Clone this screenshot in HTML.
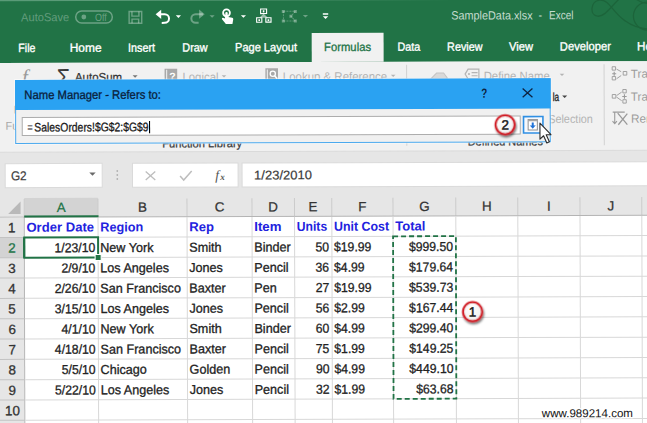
<!DOCTYPE html>
<html lang="en"><head><meta charset="utf-8"><title>Name Manager - Refers to</title>
<style>html,body{margin:0;padding:0;background:#fff;overflow:hidden}svg{display:block}</style></head>
<body>
<svg width="647" height="423" viewBox="0 0 647 423" font-family='"Liberation Sans", sans-serif' text-rendering="geometricPrecision">
<g transform="rotate(-0.17 323.5 211.5)">
<rect x="-10" y="-10" width="667" height="443" fill="#ffffff" />
<rect x="-10" y="-10" width="667" height="72.1" fill="#217346" />
<rect x="-10" y="62.1" width="667" height="89.2" fill="#f1f1f1" />
<rect x="-10" y="151.3" width="667" height="65" fill="#e6e6e6" />
<line x1="-10" y1="151.3" x2="657" y2="151.3" stroke="#dadada" stroke-width="1" />
<rect x="-10" y="-3" width="667" height="3.4" fill="#5a9b78" />
<g fill="none" stroke="#1c6239" stroke-width="1.3" opacity="0.85"><path d="M623 -3 C 612 6, 606 18, 598 17 C 590 16, 591 2, 600 1 C 610 0, 612 12, 626 22 C 634 28, 642 30, 652 30"/><circle cx="648" cy="17" r="14"/><path d="M632 -4 C 640 4, 648 6, 655 3"/></g>
<text x="21.7" y="20.5" font-size="11.8" fill="rgba(255,255,255,0.3)" textLength="48" lengthAdjust="spacingAndGlyphs">AutoSave</text>
<rect x="76.3" y="10.3" width="36.6" height="12" rx="6" fill="none" stroke="rgba(255,255,255,0.34)" stroke-width="1.5"/>
<circle cx="84.4" cy="16.3" r="2.4" fill="rgba(255,255,255,0.34)"/>
<text x="95.5" y="20.3" font-size="10.5" fill="rgba(255,255,255,0.34)" textLength="11.8" lengthAdjust="spacingAndGlyphs">Off</text>
<g fill="none" stroke="rgba(255,255,255,0.34)" stroke-width="1.4"><path d="M129.7 10.9h12.6v11.8h-12.6z"/><path d="M132.5 11v4.6h7v-4.6"/><path d="M132.6 22.6v-4h6.6v4"/></g>
<g fill="none" stroke="#fff" stroke-width="2" stroke-linecap="butt"><path d="M158 13.8 H165.3 a4.3 4.3 0 0 1 0 8.6 H162.3"/></g><path d="M156.2 13.8 l5.6 -4.6 v9.2z" fill="#fff"/>
<path d="M176.4 14.899999999999999h5.2l-2.6 2.6z" fill="#fff"/>
<g fill="none" stroke="rgba(255,255,255,0.34)" stroke-width="2"><path d="M203.5 13.8 H196.2 a4.3 4.3 0 0 0 0 8.6 H199.2"/></g><path d="M205.3 13.8 l-5.6 -4.6 v9.2z" fill="rgba(255,255,255,0.34)"/>
<path d="M210.1 14.899999999999999h5.2l-2.6 2.6z" fill="rgba(255,255,255,0.34)"/>
<g fill="#fff"><circle cx="227.1" cy="12.6" r="4.3"/><path d="M225.6 12.4 a1.5 1.5 0 0 1 3 0 v4.2 l4.2 1 q1.2 .4 1 1.7 l-.8 4.5 h-6.6 l-3.8 -4.8 q-.6 -1.2 .7 -1.6 l2.3 .8z"/></g><circle cx="227.1" cy="12.5" r="2.5" fill="#217346"/><rect x="225.9" y="11.6" width="2.4" height="6" rx="1.2" fill="#fff"/>
<path d="M241.4 14.899999999999999h5.2l-2.6 2.6z" fill="#fff"/>
<g fill="none" stroke="#fff" stroke-width="1.1"><rect x="261.2" y="8.8" width="6" height="4.6"/><rect x="257.2" y="17.6" width="5.2" height="4.4"/><rect x="266.4" y="17.6" width="5.2" height="4.4"/></g><path d="M259.8 17.6 l4.4 -4 l4.4 4z" fill="rgba(255,255,255,0.55)"/><g fill="#fff"><rect x="263.4" y="10" width="1.6" height="2.2"/><rect x="259" y="19" width="1.6" height="1.8"/><rect x="268.2" y="19" width="1.6" height="1.8"/></g>
<g fill="none" stroke="rgba(255,255,255,0.34)" stroke-width="1" stroke-dasharray="2 1" opacity="0.8"><path d="M284 11.2h12M284 21h12M284 11.2v9.8M296 11.2l-4.5 4.9 4.5 4.9"/></g><g fill="rgba(255,255,255,0.34)"><rect x="282.4" y="9.8" width="3" height="3"/><rect x="294.4" y="9.8" width="3" height="3"/><rect x="282.4" y="19.5" width="3" height="3"/><rect x="294.4" y="19.5" width="3" height="3"/><rect x="290" y="14.6" width="3" height="3"/></g>
<path d="M303.4 14.899999999999999h5.2l-2.6 2.6z" fill="rgba(255,255,255,0.34)"/>
<rect x="323.4" y="13.2" width="5.4" height="1.5" fill="#fff" />
<path d="M323.40000000000003 16.25h5.4l-2.7 2.7z" fill="#fff"/>
<text x="451.8" y="20" font-size="12" fill="#c5dccf" textLength="81.4" lengthAdjust="spacingAndGlyphs">SampleData.xlsx</text>
<text x="539.2" y="20" font-size="12" fill="#c5dccf" textLength="3.6" lengthAdjust="spacingAndGlyphs">-</text>
<text x="549.6" y="20" font-size="12" fill="#c5dccf" textLength="24.4" lengthAdjust="spacingAndGlyphs">Excel</text>
<rect x="312.2" y="33" width="71.9" height="29" fill="#f1f1f1" />
<text x="18.8" y="51.1" font-size="11.9" fill="#ffffff" textLength="17.1" lengthAdjust="spacingAndGlyphs" stroke="#ffffff" stroke-width="0.35">File</text>
<text x="70.2" y="51.1" font-size="11.9" fill="#ffffff" textLength="31.8" lengthAdjust="spacingAndGlyphs" stroke="#ffffff" stroke-width="0.35">Home</text>
<text x="128.6" y="51.1" font-size="11.9" fill="#ffffff" textLength="27.0" lengthAdjust="spacingAndGlyphs" stroke="#ffffff" stroke-width="0.35">Insert</text>
<text x="182.8" y="51.1" font-size="11.9" fill="#ffffff" textLength="25.4" lengthAdjust="spacingAndGlyphs" stroke="#ffffff" stroke-width="0.35">Draw</text>
<text x="235.5" y="51.1" font-size="11.9" fill="#ffffff" textLength="62.0" lengthAdjust="spacingAndGlyphs" stroke="#ffffff" stroke-width="0.35">Page Layout</text>
<text x="397.9" y="51.1" font-size="11.9" fill="#ffffff" textLength="22.8" lengthAdjust="spacingAndGlyphs" stroke="#ffffff" stroke-width="0.35">Data</text>
<text x="447.6" y="51.1" font-size="11.9" fill="#ffffff" textLength="35.3" lengthAdjust="spacingAndGlyphs" stroke="#ffffff" stroke-width="0.35">Review</text>
<text x="509.6" y="51.1" font-size="11.9" fill="#ffffff" textLength="24.0" lengthAdjust="spacingAndGlyphs" stroke="#ffffff" stroke-width="0.35">View</text>
<text x="560.3" y="51.1" font-size="11.9" fill="#ffffff" textLength="51.1" lengthAdjust="spacingAndGlyphs" stroke="#ffffff" stroke-width="0.35">Developer</text>
<text x="324.6" y="51.1" font-size="11.9" fill="#217346" textLength="46.9" lengthAdjust="spacingAndGlyphs" stroke="#217346" stroke-width="0.3">Formulas</text>
<text x="637.6" y="51.1" font-size="11.9" fill="#ffffff" textLength="24" lengthAdjust="spacingAndGlyphs" stroke="#ffffff" stroke-width="0.35">Help</text>
<text x="22.4" y="83" font-size="21" fill="#9a9a9a" font-family='"Liberation Serif", serif' font-style="italic">f</text>
<text x="57.2" y="85.2" font-size="24.5" fill="#3b3b3b" textLength="13.4" lengthAdjust="spacingAndGlyphs">Σ</text>
<text x="75.3" y="80.6" font-size="11.9" fill="#333" textLength="47.2" lengthAdjust="spacingAndGlyphs" stroke="#333" stroke-width="0.25">AutoSum</text>
<path d="M133.0 74.75h5l-2.5 2.5z" fill="#777"/>
<g><rect x="165" y="68.2" width="12.6" height="13" fill="#a9a9a9"/><rect x="166.4" y="69.4" width="1.2" height="12" fill="#e6e6e6"/></g>
<text x="169.6" y="79.6" font-size="10.5" fill="#ffffff" font-weight="bold">?</text>
<text x="182.8" y="80.6" font-size="11.9" fill="#b4b4b4" textLength="36.2" lengthAdjust="spacingAndGlyphs">Logical</text>
<path d="M222.1 74.85h4.6l-2.3 2.3z" fill="#b4b4b4"/>
<g><rect x="265.8" y="68.2" width="12.6" height="13" fill="#a9a9a9"/><rect x="267.2" y="69.4" width="1.2" height="12" fill="#e6e6e6"/><circle cx="273.2" cy="73.6" r="2.6" fill="none" stroke="#fff" stroke-width="1.3"/><path d="M275 75.6l2.6 3" stroke="#fff" stroke-width="1.5"/></g>
<text x="283.2" y="80.6" font-size="11.9" fill="#b4b4b4" textLength="104.4" lengthAdjust="spacingAndGlyphs">Lookup &amp; Reference</text>
<path d="M391.3 74.85h4.6l-2.3 2.3z" fill="#b4b4b4"/>
<line x1="407" y1="65" x2="407" y2="146" stroke="#d2d2d2" stroke-width="1" />
<path d="M428.5 82 L437 73.4 H444 L447.5 78 V82" fill="#d9d9d9" stroke="#c4c4c4" stroke-width="1"/>
<g fill="none" stroke="#b4b4b4" stroke-width="1.2"><path d="M468.5 69.6 h10.8 v9.8 h-10.8 l-3 -4.9z"/><path d="M472 73h6M472 76.2h6" /></g><circle cx="469.4" cy="74.5" r="1" fill="#b4b4b4"/>
<text x="484.1" y="80.6" font-size="11.9" fill="#b4b4b4" textLength="66" lengthAdjust="spacingAndGlyphs">Define Name</text>
<path d="M560.1 74.44999999999999h4.6l-2.3 2.3z" fill="#b4b4b4"/>
<text x="553" y="101.6" font-size="11.9" fill="#222" textLength="6.4" lengthAdjust="spacingAndGlyphs" stroke="#222" stroke-width="0.35">la</text>
<path d="M562.5 96.15h5l-2.5 2.5z" fill="#444"/>
<text x="548.4" y="123.8" font-size="11.9" fill="#b4b4b4" textLength="44.8" lengthAdjust="spacingAndGlyphs">Selection</text>
<line x1="604.5" y1="65" x2="604.5" y2="146" stroke="#d2d2d2" stroke-width="1" />
<g><rect x="612.6" y="67.6" width="3.4" height="3.4" fill="none" stroke="#9a9a9a" stroke-width="0.9"/><rect x="612.6" y="77.4" width="3.4" height="3.4" fill="none" stroke="#9a9a9a" stroke-width="0.9"/><rect x="623.6" y="72.4" width="3.6" height="3.6" fill="none" stroke="#9a9a9a" stroke-width="0.9"/><path d="M617 70l4.6 2.6M617 79.6l4.6-3.2" stroke="#9a9a9a" stroke-width="0.9" fill="none"/><path d="M612.6 74.6h4M614.6 72.6v4" stroke="#9a9a9a" stroke-width="1.1"/></g>
<text x="631.2" y="78.8" font-size="11.9" fill="#9c9c9c" textLength="92" lengthAdjust="spacingAndGlyphs">Trace Precedents</text>
<g><rect x="612.6" y="95.4" width="3.6" height="3.6" fill="none" stroke="#9a9a9a" stroke-width="0.9"/><rect x="623.2" y="90.4" width="3.4" height="3.4" fill="none" stroke="#9a9a9a" stroke-width="0.9"/><rect x="623.2" y="100.6" width="3.4" height="3.4" fill="none" stroke="#9a9a9a" stroke-width="0.9"/><path d="M617 96.4l5-3.4M617 98l5 3.6" stroke="#9a9a9a" stroke-width="0.9" fill="none"/><path d="M622.6 97.4h4.4M624.8 95.2v4.4" stroke="#9a9a9a" stroke-width="1.1"/></g>
<text x="631.2" y="101.7" font-size="11.9" fill="#9c9c9c" textLength="96" lengthAdjust="spacingAndGlyphs">Trace Dependents</text>
<g stroke="#9a9a9a" stroke-width="1.1" fill="none"><path d="M615 112.4v12M612.8 122l2.2 2.6 2.2-2.6M613 113l12 0"/><path d="M618 114l9.6 11.6M627.6 114.6l-9 11" stroke-width="1.3"/></g>
<text x="631.2" y="123.7" font-size="11.9" fill="#9c9c9c" textLength="83" lengthAdjust="spacingAndGlyphs">Remove Arrows</text>
<text x="5.8" y="128.9" font-size="11.4" fill="#a8a8a8" textLength="42" lengthAdjust="spacingAndGlyphs">Function</text>
<text x="13.9" y="112.6" font-size="11.4" fill="#8c8c8c" textLength="28" lengthAdjust="spacingAndGlyphs">Insert</text>
<text x="162.4" y="147" font-size="11.6" fill="#3a3a3a" textLength="80" lengthAdjust="spacingAndGlyphs" stroke="#3a3a3a" stroke-width="0.25">Function Library</text>
<text x="467.9" y="146" font-size="11.6" fill="#3a3a3a" textLength="75.2" lengthAdjust="spacingAndGlyphs" stroke="#3a3a3a" stroke-width="0.25">Defined Names</text>
<rect x="14.6" y="78.2" width="537.2" height="65.6" fill="#ffffff" opacity="0.55"/>
<rect x="15.4" y="79" width="535.6" height="64" fill="#4aa9ee" />
<rect x="15.4" y="79" width="535.6" height="30.200000000000003" fill="#2aa2f2" />
<rect x="16.4" y="109.2" width="533.6" height="32.8" fill="#f0f0f0" />
<text x="24.7" y="98.2" font-size="12.2" fill="#0a1d3a" textLength="136.6" lengthAdjust="spacingAndGlyphs" stroke="#0a1d3a" stroke-width="0.3">Name Manager - Refers to:</text>
<text x="481.6" y="98.2" font-size="13.4" fill="#0d2342" textLength="6" lengthAdjust="spacingAndGlyphs" font-weight="bold">?</text>
<path d="M523 89.2l9.8 8.6M532.8 89.2l-9.8 8.6" stroke="#0d2342" stroke-width="1.3" fill="none"/>
<rect x="22.5" y="116.6" width="498" height="18.1" fill="#ffffff" stroke="#adadad" stroke-width="1"/>
<text x="27.6" y="130.6" font-size="12.4" fill="#1a1a1a" textLength="5.6" lengthAdjust="spacingAndGlyphs">=</text>
<text x="34.6" y="130.7" font-size="12.4" fill="#1a1a1a" textLength="114.2" lengthAdjust="spacingAndGlyphs" stroke="#1a1a1a" stroke-width="0.3">SalesOrders!$G$2:$G$9</text>
<line x1="149.8" y1="120.6" x2="149.8" y2="132.8" stroke="#000" stroke-width="1.1" />
<rect x="523.8" y="117.2" width="19.4" height="16.4" fill="#f6f9fd" stroke="#2f8fe3" stroke-width="1.6"/><rect x="528.4" y="120.2" width="9.2" height="10.4" fill="#ffffff" stroke="#8e8e8e" stroke-width="1"/><rect x="528.4" y="120.2" width="9.2" height="1.6" fill="#a5a5a5"/><path d="M532 123.2h2v2.8h2l-3 3.4-3-3.4h2z" fill="#1f73d8"/>
<rect x="5.3" y="162.7" width="97" height="24" fill="#ffffff" stroke="#dadada" stroke-width="1"/>
<text x="11" y="179.4" font-size="12.8" fill="#3c3c3c" textLength="15.8" lengthAdjust="spacingAndGlyphs" stroke="#3c3c3c" stroke-width="0.2">G2</text>
<path d="M89.39999999999999 171.8h6.4l-3.2 3.2z" fill="#6a6a6a"/>
<circle cx="117.4" cy="170.4" r="0.9" fill="#b0b0b0"/>
<circle cx="117.4" cy="174.4" r="0.9" fill="#b0b0b0"/>
<circle cx="117.4" cy="178.4" r="0.9" fill="#b0b0b0"/>
<rect x="132.6" y="162.7" width="105.6" height="24" fill="#ffffff" stroke="#dadada" stroke-width="1"/>
<path d="M145.8 171l9.6 8.4M155.4 171l-9.6 8.4" stroke="#bdbdbd" stroke-width="1.3" fill="none"/>
<path d="M180.2 175.6l3.6 4 8-9" stroke="#bdbdbd" stroke-width="1.5" fill="none"/>
<text x="215.4" y="179.4" font-size="13.6" fill="#555" font-family='"Liberation Serif", serif' font-style="italic">f</text>
<text x="220.4" y="179.6" font-size="9" fill="#555" font-weight="bold" font-family='"Liberation Serif", serif' font-style="italic">x</text>
<rect x="242.2" y="162.7" width="420" height="24" fill="#ffffff" stroke="#dadada" stroke-width="1"/>
<text x="254.2" y="179.3" font-size="12.6" fill="#3c3c3c" textLength="57.8" lengthAdjust="spacingAndGlyphs" stroke="#3c3c3c" stroke-width="0.2">1/23/2010</text>
<rect x="24.2" y="197" width="73.8" height="19.19999999999999" fill="#d3d3d3" />
<rect x="0" y="236.51999999999998" width="24.2" height="20.32" fill="#d3d3d3" />
<line x1="24.2" y1="198" x2="24.2" y2="216.2" stroke="#cbcbcb" stroke-width="1" />
<line x1="98" y1="198" x2="98" y2="216.2" stroke="#cbcbcb" stroke-width="1" />
<line x1="187" y1="198" x2="187" y2="216.2" stroke="#cbcbcb" stroke-width="1" />
<line x1="252" y1="198" x2="252" y2="216.2" stroke="#cbcbcb" stroke-width="1" />
<line x1="294.5" y1="198" x2="294.5" y2="216.2" stroke="#cbcbcb" stroke-width="1" />
<line x1="331.8" y1="198" x2="331.8" y2="216.2" stroke="#cbcbcb" stroke-width="1" />
<line x1="393" y1="198" x2="393" y2="216.2" stroke="#cbcbcb" stroke-width="1" />
<line x1="455.8" y1="198" x2="455.8" y2="216.2" stroke="#cbcbcb" stroke-width="1" />
<line x1="517.8" y1="198" x2="517.8" y2="216.2" stroke="#cbcbcb" stroke-width="1" />
<line x1="580" y1="198" x2="580" y2="216.2" stroke="#cbcbcb" stroke-width="1" />
<line x1="641.8" y1="198" x2="641.8" y2="216.2" stroke="#cbcbcb" stroke-width="1" />
<line x1="-10" y1="216.2" x2="657" y2="216.2" stroke="#b4b4b4" stroke-width="1" />
<rect x="-10" y="216.7" width="33.7" height="300" fill="#e6e6e6" />
<rect x="-10" y="236.51999999999998" width="34.2" height="20.32" fill="#d3d3d3" />
<line x1="24.2" y1="216.2" x2="24.2" y2="433" stroke="#b4b4b4" stroke-width="1" />
<line x1="-10" y1="236.51999999999998" x2="24.2" y2="236.51999999999998" stroke="#c3c3c3" stroke-width="1" />
<line x1="-10" y1="256.84" x2="24.2" y2="256.84" stroke="#c3c3c3" stroke-width="1" />
<line x1="-10" y1="277.15999999999997" x2="24.2" y2="277.15999999999997" stroke="#c3c3c3" stroke-width="1" />
<line x1="-10" y1="297.48" x2="24.2" y2="297.48" stroke="#c3c3c3" stroke-width="1" />
<line x1="-10" y1="317.79999999999995" x2="24.2" y2="317.79999999999995" stroke="#c3c3c3" stroke-width="1" />
<line x1="-10" y1="338.12" x2="24.2" y2="338.12" stroke="#c3c3c3" stroke-width="1" />
<line x1="-10" y1="358.44" x2="24.2" y2="358.44" stroke="#c3c3c3" stroke-width="1" />
<line x1="-10" y1="378.76" x2="24.2" y2="378.76" stroke="#c3c3c3" stroke-width="1" />
<line x1="-10" y1="399.08" x2="24.2" y2="399.08" stroke="#c3c3c3" stroke-width="1" />
<line x1="-10" y1="419.4" x2="24.2" y2="419.4" stroke="#c3c3c3" stroke-width="1" />
<line x1="-10" y1="439.72" x2="24.2" y2="439.72" stroke="#c3c3c3" stroke-width="1" />
<line x1="98" y1="216.7" x2="98" y2="433" stroke="#d8d8d8" stroke-width="1" />
<line x1="187" y1="216.7" x2="187" y2="433" stroke="#d8d8d8" stroke-width="1" />
<line x1="252" y1="216.7" x2="252" y2="433" stroke="#d8d8d8" stroke-width="1" />
<line x1="294.5" y1="216.7" x2="294.5" y2="433" stroke="#d8d8d8" stroke-width="1" />
<line x1="331.8" y1="216.7" x2="331.8" y2="433" stroke="#d8d8d8" stroke-width="1" />
<line x1="393" y1="216.7" x2="393" y2="433" stroke="#d8d8d8" stroke-width="1" />
<line x1="455.8" y1="216.7" x2="455.8" y2="433" stroke="#d8d8d8" stroke-width="1" />
<line x1="517.8" y1="216.7" x2="517.8" y2="433" stroke="#d8d8d8" stroke-width="1" />
<line x1="580" y1="216.7" x2="580" y2="433" stroke="#d8d8d8" stroke-width="1" />
<line x1="641.8" y1="216.7" x2="641.8" y2="433" stroke="#d8d8d8" stroke-width="1" />
<line x1="24.7" y1="236.51999999999998" x2="657" y2="236.51999999999998" stroke="#d8d8d8" stroke-width="1" />
<line x1="24.7" y1="256.84" x2="657" y2="256.84" stroke="#d8d8d8" stroke-width="1" />
<line x1="24.7" y1="277.15999999999997" x2="657" y2="277.15999999999997" stroke="#d8d8d8" stroke-width="1" />
<line x1="24.7" y1="297.48" x2="657" y2="297.48" stroke="#d8d8d8" stroke-width="1" />
<line x1="24.7" y1="317.79999999999995" x2="657" y2="317.79999999999995" stroke="#d8d8d8" stroke-width="1" />
<line x1="24.7" y1="338.12" x2="657" y2="338.12" stroke="#d8d8d8" stroke-width="1" />
<line x1="24.7" y1="358.44" x2="657" y2="358.44" stroke="#d8d8d8" stroke-width="1" />
<line x1="24.7" y1="378.76" x2="657" y2="378.76" stroke="#d8d8d8" stroke-width="1" />
<line x1="24.7" y1="399.08" x2="657" y2="399.08" stroke="#d8d8d8" stroke-width="1" />
<line x1="24.7" y1="419.4" x2="657" y2="419.4" stroke="#d8d8d8" stroke-width="1" />
<line x1="24.7" y1="439.72" x2="657" y2="439.72" stroke="#d8d8d8" stroke-width="1" />
<path d="M20.6 200.6 V213 H8.2z" fill="#b9b9b9"/>
<text x="61.1" y="211.3" font-size="13.4" fill="#217346" text-anchor="middle" stroke="#217346" stroke-width="0.25">A</text>
<text x="142.5" y="211.3" font-size="13.4" fill="#333" text-anchor="middle" stroke="#333" stroke-width="0.25">B</text>
<text x="219.5" y="211.3" font-size="13.4" fill="#333" text-anchor="middle" stroke="#333" stroke-width="0.25">C</text>
<text x="273.2" y="211.3" font-size="13.4" fill="#333" text-anchor="middle" stroke="#333" stroke-width="0.25">D</text>
<text x="313.1" y="211.3" font-size="13.4" fill="#333" text-anchor="middle" stroke="#333" stroke-width="0.25">E</text>
<text x="362.4" y="211.3" font-size="13.4" fill="#333" text-anchor="middle" stroke="#333" stroke-width="0.25">F</text>
<text x="424.4" y="211.3" font-size="13.4" fill="#333" text-anchor="middle" stroke="#333" stroke-width="0.25">G</text>
<text x="486.8" y="211.3" font-size="13.4" fill="#333" text-anchor="middle" stroke="#333" stroke-width="0.25">H</text>
<text x="548.9" y="211.3" font-size="13.4" fill="#333" text-anchor="middle" stroke="#333" stroke-width="0.25">I</text>
<text x="610.9" y="211.3" font-size="13.4" fill="#333" text-anchor="middle" stroke="#333" stroke-width="0.25">J</text>
<rect x="24.2" y="214.6" width="74.3" height="2" fill="#217346" />
<text x="11.8" y="231.4" font-size="13.4" fill="#333" text-anchor="middle" stroke="#333" stroke-width="0.3">1</text>
<text x="11.8" y="251.7" font-size="13.4" fill="#217346" text-anchor="middle" stroke="#217346" stroke-width="0.3">2</text>
<text x="11.8" y="272.0" font-size="13.4" fill="#333" text-anchor="middle" stroke="#333" stroke-width="0.3">3</text>
<text x="11.8" y="292.4" font-size="13.4" fill="#333" text-anchor="middle" stroke="#333" stroke-width="0.3">4</text>
<text x="11.8" y="312.7" font-size="13.4" fill="#333" text-anchor="middle" stroke="#333" stroke-width="0.3">5</text>
<text x="11.8" y="333.0" font-size="13.4" fill="#333" text-anchor="middle" stroke="#333" stroke-width="0.3">6</text>
<text x="11.8" y="353.3" font-size="13.4" fill="#333" text-anchor="middle" stroke="#333" stroke-width="0.3">7</text>
<text x="11.8" y="373.6" font-size="13.4" fill="#333" text-anchor="middle" stroke="#333" stroke-width="0.3">8</text>
<text x="11.8" y="394.0" font-size="13.4" fill="#333" text-anchor="middle" stroke="#333" stroke-width="0.3">9</text>
<text x="11.8" y="414.3" font-size="13.4" fill="#333" text-anchor="middle" stroke="#333" stroke-width="0.3">10</text>
<text x="11.8" y="434.6" font-size="13.4" fill="#333" text-anchor="middle" stroke="#333" stroke-width="0.3">11</text>
<rect x="23.0" y="236.51999999999998" width="2" height="20.32" fill="#217346" />
<text x="26.4" y="230.8" font-size="13" fill="#2222de" textLength="67.6" lengthAdjust="spacingAndGlyphs" font-weight="bold">Order Date</text>
<text x="100.2" y="230.8" font-size="13" fill="#2222de" textLength="43" lengthAdjust="spacingAndGlyphs" font-weight="bold">Region</text>
<text x="189.2" y="230.8" font-size="13" fill="#2222de" textLength="24.7" lengthAdjust="spacingAndGlyphs" font-weight="bold">Rep</text>
<text x="254.2" y="230.8" font-size="13" fill="#2222de" textLength="27.2" lengthAdjust="spacingAndGlyphs" font-weight="bold">Item</text>
<text x="296.7" y="230.8" font-size="13" fill="#2222de" textLength="30.4" lengthAdjust="spacingAndGlyphs" font-weight="bold">Units</text>
<text x="334.0" y="230.8" font-size="13" fill="#2222de" textLength="55" lengthAdjust="spacingAndGlyphs" font-weight="bold">Unit Cost</text>
<text x="395.2" y="230.8" font-size="13" fill="#2222de" textLength="30.2" lengthAdjust="spacingAndGlyphs" font-weight="bold">Total</text>
<text transform="translate(95.2 251.4) scale(0.94 1)" font-size="13" fill="#222" text-anchor="end" stroke="#222" stroke-width="0.3">1/23/10</text>
<text transform="translate(100.1 251.4) scale(0.97 1)" font-size="13" fill="#222" stroke="#222" stroke-width="0.3">New York</text>
<text transform="translate(189.1 251.4) scale(0.97 1)" font-size="13" fill="#222" stroke="#222" stroke-width="0.3">Smith</text>
<text transform="translate(254.1 251.4) scale(0.97 1)" font-size="13" fill="#222" stroke="#222" stroke-width="0.3">Binder</text>
<text transform="translate(329.0 251.4) scale(0.94 1)" font-size="13" fill="#222" text-anchor="end" stroke="#222" stroke-width="0.3">50</text>
<text transform="translate(333.9 251.4) scale(0.94 1)" font-size="13" fill="#222" stroke="#222" stroke-width="0.3">$19.99</text>
<text transform="translate(453.0 251.4) scale(0.94 1)" font-size="13" fill="#222" text-anchor="end" stroke="#222" stroke-width="0.3">$999.50</text>
<text transform="translate(95.2 271.7) scale(0.94 1)" font-size="13" fill="#222" text-anchor="end" stroke="#222" stroke-width="0.3">2/9/10</text>
<text transform="translate(100.1 271.7) scale(0.97 1)" font-size="13" fill="#222" stroke="#222" stroke-width="0.3">Los Angeles</text>
<text transform="translate(189.1 271.7) scale(0.97 1)" font-size="13" fill="#222" stroke="#222" stroke-width="0.3">Jones</text>
<text transform="translate(254.1 271.7) scale(0.97 1)" font-size="13" fill="#222" stroke="#222" stroke-width="0.3">Pencil</text>
<text transform="translate(329.0 271.7) scale(0.94 1)" font-size="13" fill="#222" text-anchor="end" stroke="#222" stroke-width="0.3">36</text>
<text transform="translate(333.9 271.7) scale(0.94 1)" font-size="13" fill="#222" stroke="#222" stroke-width="0.3">$4.99</text>
<text transform="translate(453.0 271.7) scale(0.94 1)" font-size="13" fill="#222" text-anchor="end" stroke="#222" stroke-width="0.3">$179.64</text>
<text transform="translate(95.2 292.1) scale(0.94 1)" font-size="13" fill="#222" text-anchor="end" stroke="#222" stroke-width="0.3">2/26/10</text>
<text transform="translate(100.1 292.1) scale(0.97 1)" font-size="13" fill="#222" stroke="#222" stroke-width="0.3">San Francisco</text>
<text transform="translate(189.1 292.1) scale(0.97 1)" font-size="13" fill="#222" stroke="#222" stroke-width="0.3">Baxter</text>
<text transform="translate(254.1 292.1) scale(0.97 1)" font-size="13" fill="#222" stroke="#222" stroke-width="0.3">Pen</text>
<text transform="translate(329.0 292.1) scale(0.94 1)" font-size="13" fill="#222" text-anchor="end" stroke="#222" stroke-width="0.3">27</text>
<text transform="translate(333.9 292.1) scale(0.94 1)" font-size="13" fill="#222" stroke="#222" stroke-width="0.3">$19.99</text>
<text transform="translate(453.0 292.1) scale(0.94 1)" font-size="13" fill="#222" text-anchor="end" stroke="#222" stroke-width="0.3">$539.73</text>
<text transform="translate(95.2 312.4) scale(0.94 1)" font-size="13" fill="#222" text-anchor="end" stroke="#222" stroke-width="0.3">3/15/10</text>
<text transform="translate(100.1 312.4) scale(0.97 1)" font-size="13" fill="#222" stroke="#222" stroke-width="0.3">Los Angeles</text>
<text transform="translate(189.1 312.4) scale(0.97 1)" font-size="13" fill="#222" stroke="#222" stroke-width="0.3">Jones</text>
<text transform="translate(254.1 312.4) scale(0.97 1)" font-size="13" fill="#222" stroke="#222" stroke-width="0.3">Pencil</text>
<text transform="translate(329.0 312.4) scale(0.94 1)" font-size="13" fill="#222" text-anchor="end" stroke="#222" stroke-width="0.3">56</text>
<text transform="translate(333.9 312.4) scale(0.94 1)" font-size="13" fill="#222" stroke="#222" stroke-width="0.3">$2.99</text>
<text transform="translate(453.0 312.4) scale(0.94 1)" font-size="13" fill="#222" text-anchor="end" stroke="#222" stroke-width="0.3">$167.44</text>
<text transform="translate(95.2 332.7) scale(0.94 1)" font-size="13" fill="#222" text-anchor="end" stroke="#222" stroke-width="0.3">4/1/10</text>
<text transform="translate(100.1 332.7) scale(0.97 1)" font-size="13" fill="#222" stroke="#222" stroke-width="0.3">New York</text>
<text transform="translate(189.1 332.7) scale(0.97 1)" font-size="13" fill="#222" stroke="#222" stroke-width="0.3">Smith</text>
<text transform="translate(254.1 332.7) scale(0.97 1)" font-size="13" fill="#222" stroke="#222" stroke-width="0.3">Binder</text>
<text transform="translate(329.0 332.7) scale(0.94 1)" font-size="13" fill="#222" text-anchor="end" stroke="#222" stroke-width="0.3">60</text>
<text transform="translate(333.9 332.7) scale(0.94 1)" font-size="13" fill="#222" stroke="#222" stroke-width="0.3">$4.99</text>
<text transform="translate(453.0 332.7) scale(0.94 1)" font-size="13" fill="#222" text-anchor="end" stroke="#222" stroke-width="0.3">$299.40</text>
<text transform="translate(95.2 353.0) scale(0.94 1)" font-size="13" fill="#222" text-anchor="end" stroke="#222" stroke-width="0.3">4/18/10</text>
<text transform="translate(100.1 353.0) scale(0.97 1)" font-size="13" fill="#222" stroke="#222" stroke-width="0.3">San Francisco</text>
<text transform="translate(189.1 353.0) scale(0.97 1)" font-size="13" fill="#222" stroke="#222" stroke-width="0.3">Baxter</text>
<text transform="translate(254.1 353.0) scale(0.97 1)" font-size="13" fill="#222" stroke="#222" stroke-width="0.3">Pencil</text>
<text transform="translate(329.0 353.0) scale(0.94 1)" font-size="13" fill="#222" text-anchor="end" stroke="#222" stroke-width="0.3">75</text>
<text transform="translate(333.9 353.0) scale(0.94 1)" font-size="13" fill="#222" stroke="#222" stroke-width="0.3">$1.99</text>
<text transform="translate(453.0 353.0) scale(0.94 1)" font-size="13" fill="#222" text-anchor="end" stroke="#222" stroke-width="0.3">$149.25</text>
<text transform="translate(95.2 373.3) scale(0.94 1)" font-size="13" fill="#222" text-anchor="end" stroke="#222" stroke-width="0.3">5/5/10</text>
<text transform="translate(100.1 373.3) scale(0.97 1)" font-size="13" fill="#222" stroke="#222" stroke-width="0.3">Chicago</text>
<text transform="translate(189.1 373.3) scale(0.97 1)" font-size="13" fill="#222" stroke="#222" stroke-width="0.3">Golden</text>
<text transform="translate(254.1 373.3) scale(0.97 1)" font-size="13" fill="#222" stroke="#222" stroke-width="0.3">Pencil</text>
<text transform="translate(329.0 373.3) scale(0.94 1)" font-size="13" fill="#222" text-anchor="end" stroke="#222" stroke-width="0.3">90</text>
<text transform="translate(333.9 373.3) scale(0.94 1)" font-size="13" fill="#222" stroke="#222" stroke-width="0.3">$4.99</text>
<text transform="translate(453.0 373.3) scale(0.94 1)" font-size="13" fill="#222" text-anchor="end" stroke="#222" stroke-width="0.3">$449.10</text>
<text transform="translate(95.2 393.7) scale(0.94 1)" font-size="13" fill="#222" text-anchor="end" stroke="#222" stroke-width="0.3">5/22/10</text>
<text transform="translate(100.1 393.7) scale(0.97 1)" font-size="13" fill="#222" stroke="#222" stroke-width="0.3">Los Angeles</text>
<text transform="translate(189.1 393.7) scale(0.97 1)" font-size="13" fill="#222" stroke="#222" stroke-width="0.3">Jones</text>
<text transform="translate(254.1 393.7) scale(0.97 1)" font-size="13" fill="#222" stroke="#222" stroke-width="0.3">Pencil</text>
<text transform="translate(329.0 393.7) scale(0.94 1)" font-size="13" fill="#222" text-anchor="end" stroke="#222" stroke-width="0.3">32</text>
<text transform="translate(333.9 393.7) scale(0.94 1)" font-size="13" fill="#222" stroke="#222" stroke-width="0.3">$1.99</text>
<text transform="translate(453.0 393.7) scale(0.94 1)" font-size="13" fill="#222" text-anchor="end" stroke="#222" stroke-width="0.3">$63.68</text>
<rect x="24.2" y="236.51999999999998" width="73.8" height="20.32" fill="none" stroke="#217346" stroke-width="2"/>
<rect x="95" y="253.83999999999997" width="6" height="6" fill="#217346" stroke="#fff" stroke-width="1"/>
<rect x="393" y="236.51999999999998" width="62.80000000000001" height="162.56" fill="none" stroke="#217346" stroke-width="1.8" stroke-dasharray="5 3"/>
<defs><radialGradient id="bg" cx="0.4" cy="0.3" r="0.9"><stop offset="0" stop-color="#ffffff"/><stop offset="0.7" stop-color="#f1f1f1"/><stop offset="1" stop-color="#d6d6d6"/></radialGradient>
<filter id="sh" x="-40%" y="-40%" width="190%" height="190%"><feGaussianBlur in="SourceAlpha" stdDeviation="1.3"/><feOffset dx="0.8" dy="1.8"/><feComponentTransfer><feFuncA type="linear" slope="0.55"/></feComponentTransfer><feMerge><feMergeNode/><feMergeNode in="SourceGraphic"/></feMerge></filter></defs>
<circle cx="472.3" cy="312.2" r="9.5" fill="url(#bg)" stroke="#d21f28" stroke-width="2.2" filter="url(#sh)"/>
<text x="472.3" y="317.0" font-size="13.4" fill="#1a1a1a" text-anchor="middle" stroke="#1a1a1a" stroke-width="0.5">1</text>
<circle cx="505.4" cy="125.3" r="9.5" fill="url(#bg)" stroke="#d21f28" stroke-width="2.2" filter="url(#sh)"/>
<text x="505.4" y="130.1" font-size="13.4" fill="#1a1a1a" text-anchor="middle" stroke="#1a1a1a" stroke-width="0.5">2</text>
<path d="M540.2 123.8 V139.8 L543.8 136.4 L547 143.6 L549.6 142.5 L546.4 135.4 H551.2z" fill="#ffffff" stroke="#2a2a2a" stroke-width="1.1" stroke-linejoin="round"/>
<text x="541.2" y="418" font-size="11.6" fill="#111" textLength="91.2" lengthAdjust="spacingAndGlyphs" stroke="#fff" stroke-width="2.5" paint-order="stroke" stroke-linejoin="round">www.989214.com</text>
</g>
</svg>
</body></html>
